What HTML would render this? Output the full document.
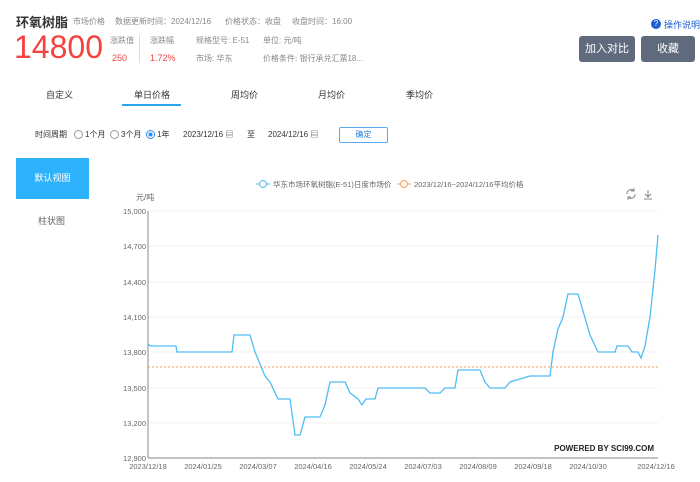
<!DOCTYPE html><html><head><meta charset="utf-8"><style>
body{margin:0;width:700px;height:482px;background:#fff;font-family:"Liberation Sans","Noto Sans CJK SC",sans-serif;position:relative;overflow:hidden;color:#333}
.a{position:absolute;white-space:nowrap}
.g{color:#888;font-size:8px}
.btn{position:absolute;background:#5f6a7d;color:#fff;font-size:11px;text-align:center;border-radius:3px;line-height:26px}
</style></head><body>
<div class="a" style="left:16px;top:12px;font-size:13px;font-weight:bold;color:#333">环氧树脂</div>
<div class="a g" style="left:73px;top:16px">市场价格</div>
<div class="a g" style="left:115px;top:16px">数据更新时间：2024/12/16</div>
<div class="a g" style="left:225px;top:16px">价格状态：收盘</div>
<div class="a g" style="left:292px;top:16px">收盘时间：16:00</div>
<div class="a" style="left:14px;top:29px;font-size:32px;color:#f4433e">14800</div>
<div class="a g" style="left:110px;top:35px">涨跌值</div>
<div class="a" style="left:112px;top:53px;font-size:9px;color:#f4433e">250</div>
<div class="a" style="left:139px;top:35px;width:1px;height:28px;background:#ddd"></div>
<div class="a g" style="left:150px;top:35px">涨跌幅</div>
<div class="a" style="left:150px;top:53px;font-size:9px;color:#f4433e">1.72%</div>
<div class="a g" style="left:196px;top:35px">规格型号: E-51</div>
<div class="a g" style="left:196px;top:53px">市场: 华东</div>
<div class="a g" style="left:263px;top:35px">单位: 元/吨</div>
<div class="a g" style="left:263px;top:53px">价格条件: 银行承兑汇票18...</div>
<div class="a" style="left:651px;top:19px;width:10px;height:10px;border-radius:50%;background:#1a5fd4;color:#fff;font-size:8px;text-align:center;line-height:10px">?</div>
<div class="a" style="left:664px;top:18px;font-size:9px;color:#1a5fd4">操作说明</div>
<div class="btn" style="left:579px;top:36px;width:56px;height:26px">加入对比</div>
<div class="btn" style="left:641px;top:36px;width:54px;height:26px">收藏</div>
<div class="a" style="left:46px;top:88px;font-size:9px">自定义</div>
<div class="a" style="left:134px;top:88px;font-size:9px">单日价格</div>
<div class="a" style="left:122px;top:104px;width:59px;height:2px;background:#2aa6f0"></div>
<div class="a" style="left:231px;top:88px;font-size:9px">周均价</div>
<div class="a" style="left:318px;top:88px;font-size:9px">月均价</div>
<div class="a" style="left:406px;top:88px;font-size:9px">季均价</div>
<div class="a" style="left:35px;top:129px;font-size:8px">时间周期</div>
<div class="a" style="left:74px;top:130px;width:7px;height:7px;border:1px solid #999;border-radius:50%"></div>
<div class="a" style="left:85px;top:129px;font-size:8px">1个月</div>
<div class="a" style="left:110px;top:130px;width:7px;height:7px;border:1px solid #999;border-radius:50%"></div>
<div class="a" style="left:121px;top:129px;font-size:8px">3个月</div>
<div class="a" style="left:146px;top:130px;width:7px;height:7px;border:1px solid #2a8ef0;border-radius:50%;background:radial-gradient(#2a8ef0 40%,#fff 45%)"></div>
<div class="a" style="left:157px;top:129px;font-size:8px">1年</div>
<div class="a" style="left:183px;top:129px;font-size:8px">2023/12/16 ▤</div>
<div class="a" style="left:247px;top:129px;font-size:8px">至</div>
<div class="a" style="left:268px;top:129px;font-size:8px">2024/12/16 ▤</div>
<div class="a" style="left:339px;top:127px;width:47px;height:14px;border:1px solid #5aa8ef;border-radius:2px;font-size:8px;color:#2a7fd8;text-align:center;line-height:14px">确定</div>
<div class="a" style="left:16px;top:158px;width:73px;height:41px;background:#2db2fb;color:#fff;font-size:9px;text-align:center;line-height:41px">默认视图</div>
<div class="a" style="left:38px;top:214px;font-size:9px;color:#666">柱状图</div>
<svg class="a" style="left:0;top:0" width="700" height="482" font-family="Liberation Sans,Noto Sans CJK SC,sans-serif">
<g stroke="#f0f0f0" stroke-width="1">
<line x1="148" y1="211" x2="658" y2="211"/><line x1="148" y1="246" x2="658" y2="246"/><line x1="148" y1="282" x2="658" y2="282"/><line x1="148" y1="317" x2="658" y2="317"/><line x1="148" y1="352" x2="658" y2="352"/><line x1="148" y1="388" x2="658" y2="388"/><line x1="148" y1="423" x2="658" y2="423"/></g>
<line x1="148" y1="211" x2="148" y2="458" stroke="#888"/><line x1="148" y1="458" x2="658" y2="458" stroke="#888"/>
<g font-size="7.5" fill="#666" text-anchor="end">
<text x="146" y="214">15,000</text><text x="146" y="249">14,700</text><text x="146" y="285">14,400</text><text x="146" y="320">14,100</text><text x="146" y="355">13,800</text><text x="146" y="391">13,500</text><text x="146" y="426">13,200</text><text x="146" y="461">12,900</text></g>
<text x="136" y="200" font-size="8" fill="#666">元/吨</text>
<g font-size="7.5" fill="#666" text-anchor="middle">
<text x="148" y="469">2023/12/18</text><text x="203" y="469">2024/01/25</text><text x="258" y="469">2024/03/07</text><text x="313" y="469">2024/04/16</text><text x="368" y="469">2024/05/24</text><text x="423" y="469">2024/07/03</text><text x="478" y="469">2024/08/09</text><text x="533" y="469">2024/09/18</text><text x="588" y="469">2024/10/30</text><text x="656" y="469">2024/12/16</text></g>
<line x1="148" y1="367" x2="658" y2="367" stroke="#f5a050" stroke-dasharray="2,2"/>
<polyline fill="none" stroke="#4fbcf2" stroke-width="1.3" points="148,344 150,346 176,346 177,352 232,352 234,335 250,335 255,352 260,364 265,376 270,382 278,399 290,399 295,435 300,435 305,417 320,417 325,405 330,382 345,382 350,393 358,399 362,405 366,399 375,399 378,388 425,388 430,393 440,393 445,388 455,388 458,370 480,370 485,382 490,388 505,388 510,382 530,376 550,376 553,352 558,329 563,317 568,294 578,294 583,311 590,335 598,352 615,352 617,346 628,346 632,352 638,352 641,358 645,346 650,317 655,270 658,235"/>
<line x1="256" y1="184" x2="270" y2="184" stroke="#4fbcf2"/><circle cx="263" cy="184" r="3.5" fill="#fff" stroke="#4fbcf2"/>
<text x="273" y="187" font-size="7.5" fill="#666">华东市场环氧树脂(E-51)日度市场价</text>
<line x1="397" y1="184" x2="411" y2="184" stroke="#f5a050"/><circle cx="404" cy="184" r="3.5" fill="#fff" stroke="#f5a050"/>
<text x="414" y="187" font-size="7.5" fill="#666">2023/12/16~2024/12/16平均价格</text>
<path d="M627 194a4 4 0 0 1 7 -3 M635 194a4 4 0 0 1 -7 3 M634 188v3h-3 M628 200v-3h3" fill="none" stroke="#888"/>
<path d="M648 190v7 M645 194l3 3 3-3 M644 199h8" fill="none" stroke="#888"/>
<text x="654" y="451" font-size="8" font-weight="bold" fill="#222" text-anchor="end">POWERED BY SCI99.COM</text>
</svg>
</body></html>
